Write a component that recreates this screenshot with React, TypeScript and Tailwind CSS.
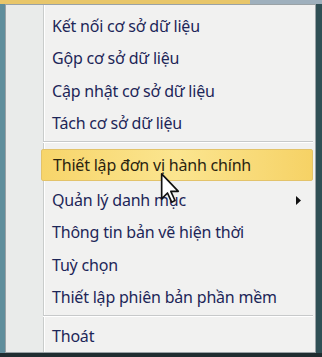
import { Fragment } from "react";

const ITEMS: { label: string; active?: boolean; sub?: boolean; sepAfter?: boolean }[] = [
  { label: "Kết nối cơ sở dữ liệu" },
  { label: "Gộp cơ sở dữ liệu" },
  { label: "Cập nhật cơ sở dữ liệu" },
  { label: "Tách cơ sở dữ liệu", sepAfter: true },
  { label: "Thiết lập đơn vị hành chính", active: true },
  { label: "Quản lý danh mục", sub: true },
  { label: "Thông tin bản vẽ hiện thời" },
  { label: "Tuỳ chọn" },
  { label: "Thiết lập phiên bản phần mềm", sepAfter: true },
  { label: "Thoát" },
];

function Cursor() {
  return (
    <svg className="absolute left-[160px] top-[172px]" width="20" height="32" viewBox="0 0 12 19">
      <path d="M1 1 L1 16 L4.5 12.5 L7 18 L9 17 L6.5 11.5 L11 11.5 Z" fill="#fff" stroke="#111" strokeWidth="1" strokeLinejoin="round" />
    </svg>
  );
}

export default function App() {
  return (
    <div className="relative w-[322px] h-[357px] overflow-hidden bg-[#3e6468] font-['Noto_Sans','Open_Sans',sans-serif]">
      <div className="flex h-[4px]">
        <div className="w-[250px] bg-[#e8c66a]" />
        <div className="flex-1 bg-[#9fb0bd]" />
      </div>
      <div className="flex h-[349px]">
        <div className="w-[5px] bg-[#5f8e9c]" />
        <div className="w-[311px] border border-[#9aa2a6] bg-[#f1f1f0] flex">
          <div className="w-[38px] bg-[#e9ebea] border-r border-r-[#c9cccb] shadow-[1px_0_0_#ffffff]" />
          <div className="flex-1 flex flex-col pt-[5px] pr-[2px]">
            {ITEMS.map((it) => (
              <Fragment key={it.label}>
                <div
                  className={
                    "relative h-[34px] flex items-center pl-[8px] text-[16px] tracking-[-0.2px] text-[#1d2658] " +
                    (it.active
                      ? "-ml-[3px] pl-[11px] h-[28px] my-[3px] rounded-[2px] border border-[#e3c36a] bg-gradient-to-r from-[#f7d56a] via-[#fbe58f] to-[#f6d265] text-[#2a2410]"
                      : "")
                  }
                >
                  {it.label}
                  {it.sub && (
                    <svg className="absolute right-[12px] top-[12px]" width="5" height="9" viewBox="0 0 5 9">
                      <path d="M0 0 L5 4.5 L0 9 Z" fill="#111" />
                    </svg>
                  )}
                </div>
                {it.sepAfter && <div className="h-[2px] mt-[2px] mb-[3px] -ml-[1px] border-t border-t-[#c7c9ca] bg-white" />}
              </Fragment>
            ))}
          </div>
        </div>
        <div className="flex-1 bg-[#2f4f55]" />
      </div>
      <div className="h-[4px] bg-[#1f2d30]" />
      <Cursor />
    </div>
  );
}
